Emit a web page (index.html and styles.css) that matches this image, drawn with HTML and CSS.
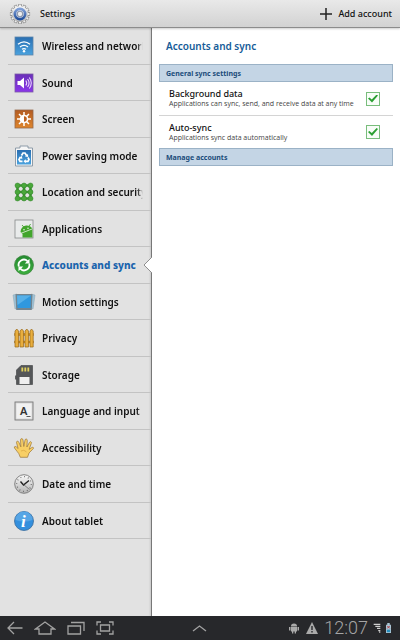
FILE: index.html
```html
<!DOCTYPE html>
<html lang="en">

<head>
  <meta charset="utf-8">
  <meta name="viewport" content="width=device-width, initial-scale=1">
  <title>Settings</title>
  <link rel="stylesheet" href="styles.css">
</head>

<body>

  <header class="topbar">
    <svg class="gear" viewBox="0 0 24 24">
      <defs>
        <linearGradient id="g-gear" x1="0" y1="0" x2="0" y2="1"><stop offset="0" stop-color="#fafafa"/><stop offset="1" stop-color="#b4b4b4"/></linearGradient>
        <linearGradient id="g-ring" x1="0" y1="0" x2="0" y2="1"><stop offset="0" stop-color="#7f9fd8"/><stop offset="1" stop-color="#23509c"/></linearGradient>
      </defs>
      <g stroke="#858585" stroke-width="3.600">
        <path d="M12 1v22M1 12h22M6.500 2.500l11 19M2.500 6.500l19 11M2.500 17.500l19-11M6.500 21.500l11-19"/>
      </g>
      <circle cx="12" cy="12" r="9.400" fill="#858585"/>
      <g stroke="#ececec" stroke-width="2.200">
        <path d="M12 1.600v20.800M1.600 12h20.800M6.800 3l10.400 18M3 6.800l18 10.400M3 17.200l18-10.400M6.800 21l10.400-18"/>
      </g>
      <circle cx="12" cy="12" r="8.800" fill="url(#g-gear)"/>
      <circle cx="12" cy="12" r="5.600" fill="#dce4f2" stroke="url(#g-ring)" stroke-width="3"/>
      <circle cx="12" cy="12" r="3" fill="#eee" stroke="#8d98ad" stroke-width="1.300"/>
    </svg>
    <h1 class="topbar-title">Settings</h1>
    <button class="add" type="button">
      <svg class="plus" viewBox="0 0 12 12"><path d="M6 0v12M0 6h12" stroke="#222" stroke-width="1.500"/></svg>
      Add account
    </button>
  </header>

  <div class="panes">
    <nav class="sidebar">
      <ul class="menu">
        <li class="row"><a class="link" href="#wireless">
          <svg class="icon" viewBox="0 0 20 20">
            <defs><linearGradient id="g-blue" x1="0" y1="0" x2="0" y2="1"><stop offset="0" stop-color="#2a6fb2"/><stop offset="1" stop-color="#4aa2de"/></linearGradient></defs>
            <rect x="1" y="1" width="18" height="18" fill="url(#g-blue)" stroke="#5d86ab" stroke-width=".8"/>
            <path d="M4 8.300q6-5 12 0M6 11q4-3.300 8 0M8 13.300q2-1.500 4 0" fill="none" stroke="#fff" stroke-width="1.300"/>
            <circle cx="10" cy="15.300" r="1.200" fill="#fff"/>
          </svg>
          <span class="name">Wireless and networks</span></a></li>
        <li class="row"><a class="link" href="#sound">
          <svg class="icon" viewBox="0 0 20 20">
            <defs><linearGradient id="g-violet" x1="0" y1="0" x2="0" y2="1"><stop offset="0" stop-color="#6a30b8"/><stop offset="1" stop-color="#8a35ea"/></linearGradient></defs>
            <rect x="1" y="1" width="18" height="18" fill="url(#g-violet)" stroke="#7a5aa5" stroke-width=".8"/>
            <path d="M3.500 8h2.500L10 4.500v11L6 12H3.500z" fill="#fff"/>
            <path d="M11.800 7.500q1.800 2.500 0 5M13.600 6q3 4 0 8M15.300 4.500q4 5.500 0 11" fill="none" stroke="#e9d9fb" stroke-width="1.100"/>
          </svg>
          <span class="name">Sound</span></a></li>
        <li class="row"><a class="link" href="#screen">
          <svg class="icon" viewBox="0 0 20 20">
            <defs><linearGradient id="g-orange" x1="0" y1="0" x2="0" y2="1"><stop offset="0" stop-color="#b35b22"/><stop offset="1" stop-color="#de852c"/></linearGradient></defs>
            <rect x="1" y="1" width="18" height="18" fill="url(#g-orange)" stroke="#94684a" stroke-width=".8"/>
            <path d="M10 3v14M3 10h14M5 5l10 10M15 5L5 15" stroke="#fff" stroke-width="1.500"/>
            <circle cx="10" cy="10" r="4.300" fill="#fff"/>
            <path d="M10 7.200a2.800 2.800 0 0 1 0 5.600z" fill="#bd6120"/>
          </svg>
          <span class="name">Screen</span></a></li>
        <li class="row"><a class="link" href="#power">
          <svg class="icon" viewBox="0 0 20 20">
            <path d="M1.500 2h4.500V0h8v2H18.500V20h-17z" fill="#f6f6f6" stroke="#8393a2" stroke-width=".9"/>
            <rect x="3" y="4" width="14" height="14.500" fill="url(#g-blue)"/>
            <path d="M7.500 9.500L9 7h2l1.700 2.800M14 11.500l1 2-1 1.800h-3.200M8.500 15.300H6l-1-1.800 1.500-2.500" fill="none" stroke="#fff" stroke-width="1.700"/>
            <path d="M11 10.500l3.200.5-.2-3zM11.800 13.300v4L9.500 15.300zM5 11.500l3-1.500.3 3z" fill="#fff"/>
          </svg>
          <span class="name">Power saving mode</span></a></li>
        <li class="row"><a class="link" href="#location">
          <svg class="icon" viewBox="0 0 20 20">
            <path d="M3.500 3.500h13v13h-13zM10 3.500v13M3.500 10h13" fill="none" stroke="#3d9432" stroke-width="2.600"/>
            <g fill="#4aa83b" stroke="#2f8128" stroke-width=".5">
              <circle cx="3.500" cy="3.500" r="2.500"/><circle cx="10" cy="3.500" r="2.500"/><circle cx="16.500" cy="3.500" r="2.500"/>
              <circle cx="3.500" cy="10" r="2.500"/><circle cx="10" cy="10" r="2.500"/><circle cx="16.500" cy="10" r="2.500"/>
              <circle cx="3.500" cy="16.500" r="2.500"/><circle cx="10" cy="16.500" r="2.500"/><circle cx="16.500" cy="16.500" r="2.500"/>
            </g>
          </svg>
          <span class="name">Location and security</span></a></li>
        <li class="row"><a class="link" href="#applications">
          <svg class="icon" viewBox="0 0 20 20">
            <rect x="1" y="1" width="18" height="18" fill="#e9ebeb" stroke="#858989" stroke-width=".8"/>
            <path d="M6.500 13q.3-5.500 5.500-6.500 5-.3 6.400 3.500v8.500H8.500V15z" fill="#42a52c"/>
            <path d="M8 6l2 2.300M16.500 5l-1.500 2.500" stroke="#42a52c" stroke-width=".9"/>
            <path d="M7 14.300l11-4.300" stroke="#d7ecd0" stroke-width=".9"/>
            <circle cx="10" cy="10.800" r=".7" fill="#fff"/><circle cx="14" cy="9.200" r=".7" fill="#fff"/>
          </svg>
          <span class="name">Applications</span></a></li>
        <li class="row current"><a class="link" href="#accounts" aria-current="page">
          <svg class="icon" viewBox="0 0 20 20">
            <defs><linearGradient id="g-green" x1="0" y1="0" x2="0" y2="1"><stop offset="0" stop-color="#248a30"/><stop offset="1" stop-color="#3cae3d"/></linearGradient></defs>
            <circle cx="10" cy="10" r="9.500" fill="url(#g-green)" stroke="#397f3b" stroke-width=".7"/>
            <path d="M4.800 11.500a5.300 5.300 0 0 1 8.700-5.400M15.200 8.500a5.300 5.300 0 0 1-8.700 5.400" fill="none" stroke="#fff" stroke-width="1.800"/>
            <path d="M15.500 3.800v4.700h-4.700zM4.500 16.200v-4.700h4.700z" fill="#fff"/>
          </svg>
          <span class="name">Accounts and sync</span></a>
          <svg class="pointer" viewBox="0 0 9 18"><path d="M9 1L1 9l8 8z" fill="#fff"/><path d="M9 1L1 9l8 8" fill="none" stroke="#8f8f8f"/></svg>
        </li>
        <li class="row"><a class="link" href="#motion">
          <svg class="icon" viewBox="0 0 20 20">
            <path d="M-1 3l4-1v14l-2 1zM21 3l-4-1v14l2 1z" fill="#9fc3d7" stroke="#8aa5b3" stroke-width=".5"/>
            <path d="M1.500 2h17L17.800 18H2.200z" fill="#74858f"/>
            <path d="M3 3.500h14l-.5 12.500h-13z" fill="#2f98de"/>
            <path d="M3 3.500h14L3.500 13z" fill="#56b0e8"/>
          </svg>
          <span class="name">Motion settings</span></a></li>
        <li class="row"><a class="link" href="#privacy">
          <svg class="icon" viewBox="0 0 20 20">
            <path d="M.5 5.500h19v2H.5zM.5 13h19v2H.5z" fill="#cf9128" stroke="#8f631c" stroke-width=".4"/>
            <path d="M1 3l1.800-2L4.500 3v16H1zM6 3l1.800-2L9.500 3v16H6zM11 3l1.800-2L14.500 3v16H11zM16 3l1.500-2L19.200 3v16H16z" fill="#e9ae3d" stroke="#97671b" stroke-width=".7"/>
          </svg>
          <span class="name">Privacy</span></a></li>
        <li class="row"><a class="link" href="#storage">
          <svg class="icon" viewBox="0 0 20 20">
            <path d="M7 .5h11.500v19h-16V15l-1-1v-3l1-1V5z" fill="#545658" stroke="#3c3e40" stroke-width=".6"/>
            <path d="M8.300 2.500v4M11.300 2.500v4M14.300 2.500v4" stroke="#e0cf5c" stroke-width="1.800"/>
            <rect x="5.500" y="12" width="10" height="7" fill="#efefef"/>
          </svg>
          <span class="name">Storage</span></a></li>
        <li class="row"><a class="link" href="#language">
          <svg class="icon" viewBox="0 0 20 20">
            <rect x="1" y="1" width="18" height="18" fill="#d8d8d8" stroke="#777" stroke-width=".9"/>
            <rect x="2.500" y="2.500" width="15" height="15" fill="#f1f1f1"/>
            <text class="key" x="6" y="14">A</text>
            <path d="M12.500 15.500h4" stroke="#333" stroke-width=".8"/>
          </svg>
          <span class="name">Language and input</span></a></li>
        <li class="row"><a class="link" href="#accessibility">
          <svg class="icon" viewBox="0 0 20 20">
            <path d="M6.300 19.300Q5 15 3 13.300L.5 10q-.6-1.400.6-1.600 1-.1 3 2.100L2.500 4.600q0-1.400 1-1.400 1 0 1.400 1.200l2 4.500L6.500 2q.2-1.400 1.200-1.400T9 2l.8 6.500L11 2.200q.3-1.400 1.300-1.200T13.300 2.500L12.900 9l2.600-4.700q.8-1 1.500-.5.800.4.300 1.600l-2.200 6 2.600-1.800q1.300-.7 1.700 0 .4.800-.7 1.700L15 15l-1.500 4.300z" fill="#f8cf65" stroke="#9b7637" stroke-width=".7"/>
            <path d="M7 13q3-2 5.500 1" fill="none" stroke="#d9a540" stroke-width=".7"/>
          </svg>
          <span class="name">Accessibility</span></a></li>
        <li class="row"><a class="link" href="#date">
          <svg class="icon" viewBox="0 0 20 20">
            <circle cx="10" cy="10" r="9.300" fill="url(#g-gear)" stroke="#777" stroke-width=".9"/>
            <circle cx="10" cy="10" r="7.300" fill="none" stroke="#555" stroke-width="1.200" stroke-dasharray=".8 3.022"/>
            <path d="M6.500 7.500L9.500 11l5.500-4.500" fill="none" stroke="#222" stroke-width="1.400"/>
            <path d="M9.500 10.500l6 5" stroke="#666" stroke-width=".7"/>
          </svg>
          <span class="name">Date and time</span></a></li>
        <li class="row"><a class="link" href="#about">
          <svg class="icon" viewBox="0 0 20 20">
            <circle cx="10" cy="10" r="9.500" fill="#338fdd" stroke="#3b6c9c" stroke-width=".8"/>
            <path d="M1.500 9a8.500 8.500 0 0 1 17 0q-8 3-17 0z" fill="#56a5e5"/>
            <text class="info" x="7" y="16">i</text>
          </svg>
          <span class="name">About tablet</span></a></li>
      </ul>
    </nav>

    <main class="content">
      <h2 class="title">Accounts and sync</h2>
      <h3 class="section">General sync settings</h3>
      <label class="option">
        <span class="text">
          <span class="label">Background data</span>
          <span class="hint">Applications can sync, send, and receive data at any time</span>
        </span>
        <input class="check" type="checkbox" checked>
      </label>
      <label class="option">
        <span class="text">
          <span class="label">Auto-sync</span>
          <span class="hint">Applications sync data automatically</span>
        </span>
        <input class="check" type="checkbox" checked>
      </label>
      <h3 class="section">Manage accounts</h3>
    </main>
  </div>

  <footer class="system">
    <button class="key-button" type="button" aria-label="Back">
      <svg width="16" height="14" viewBox="0 0 16 14"><path d="M15.500 7H1M7 1L1 7l6 6"/></svg>
    </button>
    <button class="key-button" type="button" aria-label="Home">
      <svg width="22" height="14" viewBox="0 0 22 14"><path d="M5 8H1.500L11 1l9.500 7H17v5H5z"/></svg>
    </button>
    <button class="key-button" type="button" aria-label="Recent apps">
      <svg width="18" height="14" viewBox="0 0 18 14"><path d="M1 5h12.500v8H1zM4 1.500h13V10"/></svg>
    </button>
    <button class="key-button" type="button" aria-label="Screenshot">
      <svg width="18" height="14" viewBox="0 0 18 14"><path d="M4.500 4h9v6h-9zM1 4.500V1h4M13 1h4v3.500M17 9.500V13h-4M5 13H1V9.500"/></svg>
    </button>
    <button class="key-button expand" type="button" aria-label="Expand">
      <svg width="15" height="8" viewBox="0 0 15 8"><path d="M1 7l6.500-5L14 7"/></svg>
    </button>
    <div class="status">
      <svg class="solid" width="12" height="12" viewBox="0 0 12 12"><path d="M3 4q0-2.500 3-2.500T9 4zM3 4.500h6v5H3zM1 5h1.500v3.500H1zM9.500 5H11v3.500H9.500zM4 9h1.300v2.500H4zM6.700 9H8v2.500H6.700z"/></svg>
      <svg class="solid" width="14" height="12" viewBox="0 0 14 12"><path d="M7 0l6 12H1z"/><path d="M7 4v4M7 9v1.500" stroke="#27282b" stroke-width="1.400"/></svg>
      <time class="clock">12:07</time>
      <svg width="8" height="10" viewBox="0 0 8 12"><path d="M0 1.500h8M2 4h6M4 6.500h4M5.500 9h2.500M6.500 11H8" stroke="#d0d0d0" stroke-width="1.500"/></svg>
      <svg width="5" height="10" viewBox="0 0 6 12"><path d="M0 2h1.500V0h3v2H6v10H0z" fill="#a9c5d4"/><path d="M1 8h4v3H1z" fill="#278fbe"/><path d="M1.500 3.500l3 3M4.500 3.500l-3 3" stroke="#b23c42" stroke-width="1.200"/></svg>
    </div>
  </footer>

</body>

</html>
```
FILE: styles.css
```css
* {
  box-sizing: border-box;
}

body {
  display: flex;
  flex-direction: column;
  min-height: 100vh;
  margin: 0;
  background: #fff;
  color: #111;
  font-family: "Noto Sans", "Open Sans", sans-serif;
  font-size: 10px;
}

h1, h2, h3, ul {
  margin: 0;
  padding: 0;
}

svg {
  display: block;
  flex: none;
}

button {
  padding: 0;
  border: 0;
  background: none;
  font: inherit;
  color: inherit;
}

.topbar {
  display: flex;
  align-items: center;
  height: 28px;
  padding: 0 8px;
  background: linear-gradient(#e9e9e9, #d2d2d2);
  border-bottom: 1px solid #8c8c8c;
  box-shadow: 0 1px 2px rgba(0, 0, 0, 0.2);
  z-index: 1;
}

.gear {
  width: 24px;
  height: 22px;
}

.topbar-title {
  margin-left: 8px;
  font-size: 9px;
  font-weight: 500;
}

.add {
  display: flex;
  align-items: center;
  gap: 6px;
  margin-left: auto;
  font-size: 9px;
  font-weight: 500;
}

.plus {
  width: 12px;
  height: 12px;
}

.panes {
  display: flex;
  flex: 1;
}

/* left menu */
.sidebar {
  width: 38%;
  padding-left: 8px;
  background: #e2e2e2;
  border-right: 1px solid #777;
  box-shadow: inset -2px 0 2px -1px rgba(0, 0, 0, 0.12);
}

.menu {
  list-style: none;
}

.row {
  position: relative;
  height: 36px;
  border-bottom: 1px solid #c3c3c3;
}

.row:nth-child(odd) {
  height: 37px;
}

.link {
  display: flex;
  align-items: center;
  gap: 8px;
  height: 100%;
  padding: 0 8px 0 6px;
  color: #111;
  text-decoration: none;
}

.icon {
  width: 20px;
  height: 20px;
  overflow: visible;
}

.name {
  flex: 1;
  overflow: hidden;
  white-space: nowrap;
  font-weight: 600;
  -webkit-mask-image: linear-gradient(to left, transparent, #000 6px);
  mask-image: linear-gradient(to left, transparent, #000 6px);
}

.current .name {
  color: #1a64ad;
  font-weight: 800;
  -webkit-mask-image: none;
  mask-image: none;
}

/* notch that joins the selected row to the content */
.pointer {
  position: absolute;
  top: 9px;
  right: -1px;
  width: 9px;
  height: 18px;
}

.key {
  font-size: 11px;
  font-weight: 600;
  fill: #333;
}

.info {
  font: italic bold 17px "Liberation Serif", serif;
  fill: #fff;
}

/* right pane */
.content {
  flex: 1;
  padding: 0 7px;
}

.title {
  padding: 10px 7px 9px;
  color: #165c98;
  font-size: 10px;
  font-weight: 600;
  line-height: 17px;
}

.section {
  height: 18px;
  padding: 0 6px;
  background: #c4d5e5;
  border: 1px solid #9bb2c6;
  color: #1b4c7a;
  font-size: 7px;
  font-weight: 700;
  line-height: 17px;
}

.option {
  display: flex;
  align-items: center;
  height: 33px;
  padding: 0 13px 0 10px;
}

.option + .option {
  border-top: 1px solid #d4d4d4;
}

.text {
  flex: 1;
}

.label {
  display: block;
  font-size: 9px;
  font-weight: 500;
  line-height: 11px;
}

.hint {
  display: block;
  color: #444;
  font-family: "Open Sans", "Noto Sans", sans-serif;
  font-size: 7px;
  line-height: 10px;
  white-space: nowrap;
}

.check {
  display: grid;
  place-items: center;
  width: 14px;
  height: 14px;
  margin: 0;
  appearance: none;
  background: #f8fdf8;
  border: 1px solid #79bd7c;
}

.check:checked::before {
  content: "";
  width: 10px;
  height: 8px;
  background: #2b9f33;
  clip-path: polygon(0 50%, 14% 36%, 38% 62%, 86% 0, 100% 14%, 40% 100%);
}

/* system bar */
.system {
  display: flex;
  align-items: center;
  height: 24px;
  padding: 0 9px 0 7px;
  background: #27282b;
}

.key-button {
  margin-right: 11px;
}

.key-button path {
  fill: none;
  stroke: #a2a2a2;
  stroke-width: 1.3;
}

.expand {
  margin-left: 67px;
}

.status {
  display: flex;
  align-items: center;
  gap: 5px;
  margin-left: auto;
}

.solid {
  fill: #aaa;
}

.clock {
  color: #a5a5a5;
  font-family: Roboto, sans-serif;
  font-size: 18px;
  font-weight: 300;
  line-height: 24px;
}
```
